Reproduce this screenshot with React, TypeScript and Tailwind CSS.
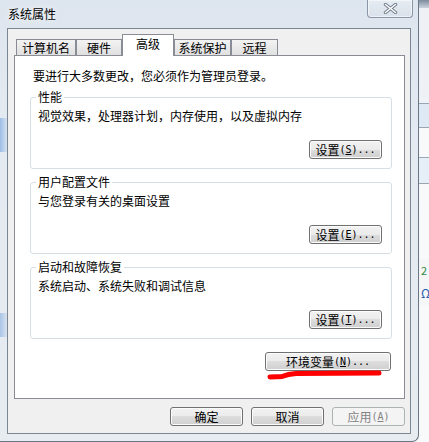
import React from "react";

const mono = "font-['DejaVu_Sans_Mono',monospace] text-[10px]";

function Btn({
  className,
  children,
  disabled,
}: {
  className: string;
  children: React.ReactNode;
  disabled?: boolean;
}) {
  return (
    <div
      className={
        "flex h-[19px] items-center justify-center rounded-[3px] border leading-[16px] " +
        (disabled
          ? "border-[#adb2b5] bg-[#f4f4f4] text-[#838383] "
          : "border-[#707070] bg-[linear-gradient(#f2f2f2_0%,#ebebeb_50%,#dddddd_50%,#cfcfcf_100%)] shadow-[inset_0_0_0_1px_#fcfcfc] text-black ") +
        className
      }
    >
      {children}
    </div>
  );
}

function Mn({ k }: { k: string }) {
  return (
    <span className={mono}>
      (<span className="underline">{k}</span>)...
    </span>
  );
}

function Group({
  title,
  desc,
  k,
  className,
}: {
  title: string;
  desc: string;
  k: string;
  className: string;
}) {
  return (
    <fieldset
      className={
        "ml-[15px] w-[362px] rounded-[3px] border border-[#d5dfe5] p-0 " + className
      }
    >
      <legend className="ml-[5px] px-[2px] leading-[16px]">{title}</legend>
      <div className="mt-[3px] pl-[7px] leading-[16px]">{desc}</div>
      <div className="mt-[16px] flex justify-end pr-[9px] pb-[9px]">
        <Btn className="w-[73px]">
          设置
          <Mn k={k} />
        </Btn>
      </div>
    </fieldset>
  );
}

function Tab({
  label,
  className,
  active,
}: {
  label: string;
  className: string;
  active?: boolean;
}) {
  return (
    <div
      className={
        "flex items-center justify-center border border-b-0 border-[#898c95] leading-[16px] " +
        (active
          ? "relative z-10 -mb-px h-[22px] bg-white pb-[3px] "
          : "h-[16px] bg-[linear-gradient(#f3f3f3,#e0e0e0)] pt-[1px] ") +
        className
      }
    >
      {label}
    </div>
  );
}

export default function App() {
  return (
    <div className="relative flex h-[442px] w-[429px] overflow-hidden bg-[#f6f8fa] font-['Noto_Sans_CJK_SC','Noto_Sans',sans-serif] text-[12px] leading-[16px] text-black">
      {/* window */}
      <div className="flex h-[442px] w-[419px] shrink-0 flex-col rounded-br-[7px] border-r border-b border-[#6b7785] bg-[linear-gradient(180deg,#dde5ee_0%,#e4eaf1_30%,#e7ecf1_100%)]">
        {/* title bar */}
        <div className="flex h-[28px] items-start">
          <span className="ml-[8px] mt-[6px] text-[12px] leading-[16px] [text-shadow:0_0_6px_#ffffff]">
            系统属性
          </span>
          <div className="flex-1" />
          <div className="mr-[5px] flex h-[18px] w-[46px] items-center justify-center rounded-b-[4px] border border-t-0 border-[#8b97a8] bg-[linear-gradient(#e6ecf3,#d9e1ea)] shadow-[inset_0_0_0_1px_rgba(255,255,255,0.55)]">
            <svg width="15" height="11" viewBox="0 0 15 11">
              <path d="M2.5 1.5 L12.5 9.5 M12.5 1.5 L2.5 9.5" stroke="#6f7a88" strokeWidth="3.4" strokeLinecap="round" fill="none" />
              <path d="M2.5 1.5 L12.5 9.5 M12.5 1.5 L2.5 9.5" stroke="#ffffff" strokeWidth="1.6" strokeLinecap="round" fill="none" />
            </svg>
          </div>
        </div>

        {/* body */}
        <div className="flex h-[406px]">
          {/* left frame */}
          <div className="flex w-[7px] flex-col">
            <div className="h-[90px]" />
            <div className="h-[34px] bg-[linear-gradient(90deg,#9dbde6,#d6e2ef)]" />
            <div className="h-[161px]" />
            <div className="h-[24px] bg-[linear-gradient(90deg,#a9c5e8,#d9e3ee)]" />
          </div>

          {/* client */}
          <div className="flex h-[406px] w-[404px] flex-col border border-[#7b8694] bg-[#f0f0f0]">
            {/* tabs */}
            <div className="flex h-[26px] items-end pl-[8px]">
              <Tab label="计算机名" className="w-[60px]" />
              <Tab label="硬件" className="w-[46px]" />
              <Tab label="高级" className="w-[52px]" active />
              <Tab label="系统保护" className="w-[57px]" />
              <Tab label="远程" className="w-[47px]" />
            </div>

            {/* panel */}
            <div className="ml-[6px] flex h-[344px] w-[391px] flex-col border border-[#898c95] bg-white">
              <div className="pl-[18px] pt-[12px]">要进行大多数更改，您必须作为管理员登录。</div>
              <Group title="性能" desc="视觉效果，处理器计划，内存使用，以及虚拟内存" k="S" className="mt-[5px]" />
              <Group title="用户配置文件" desc="与您登录有关的桌面设置" k="E" className="mt-[5px]" />
              <Group title="启动和故障恢复" desc="系统启动、系统失败和调试信息" k="T" className="mt-[5px]" />
              <div className="mt-[13px] flex justify-end pr-[13px]">
                <Btn className="w-[126px]">
                  环境变量
                  <Mn k="N" />
                </Btn>
              </div>
            </div>

            {/* bottom buttons */}
            <div className="mt-[8px] flex justify-end gap-[8px] pr-[5px]">
              <Btn className="w-[73px]">确定</Btn>
              <Btn className="w-[73px]">取消</Btn>
              <Btn className="w-[73px]" disabled>
                应用<span className={mono}>(<span className="underline">A</span>)</span>
              </Btn>
            </div>
          </div>
          {/* right frame */}
          <div className="flex-1" />
        </div>
      </div>

      {/* background window strip on the right */}
      <div className="flex flex-1 flex-col bg-[#f4f6f8]">
        <div className="h-[8px] bg-[linear-gradient(#7d8b9c,#c9d3de)]" />
        <div className="h-[95px] bg-[#eef2f6]" />
        <div className="h-[24px] border-t border-[#9aa6b4] bg-[#dfe9f5]" />
        <div className="h-[30px] border-t border-[#9aa6b4] bg-[#f7f9fb]" />
        <div className="h-[26px] border-t border-[#9aa6b4] bg-[#e6eef7]" />
        <div className="h-[76px] border-t border-[#9aa6b4] bg-[#f7f9fb]" />
        <div className="h-[22px] pl-[2px] text-[11px] leading-[22px] text-[#2e8b3a]">2</div>
        <div className="h-[24px] pl-[2px] text-[12px] leading-[24px] text-[#2a5db0]">Ω</div>
        <div className="flex-1 bg-[#f7f9fb]" />
      </div>

      {/* red annotation underline */}
      <svg
        className="pointer-events-none absolute left-0 top-0"
        width="429"
        height="442"
        viewBox="0 0 429 442"
      >
        <path
          d="M270 377 L282 376.5 Q288 374 296 373.5 L379 373"
          stroke="#ff0000"
          strokeWidth="5"
          strokeLinecap="round"
          fill="none"
        />
      </svg>
    </div>
  );
}
